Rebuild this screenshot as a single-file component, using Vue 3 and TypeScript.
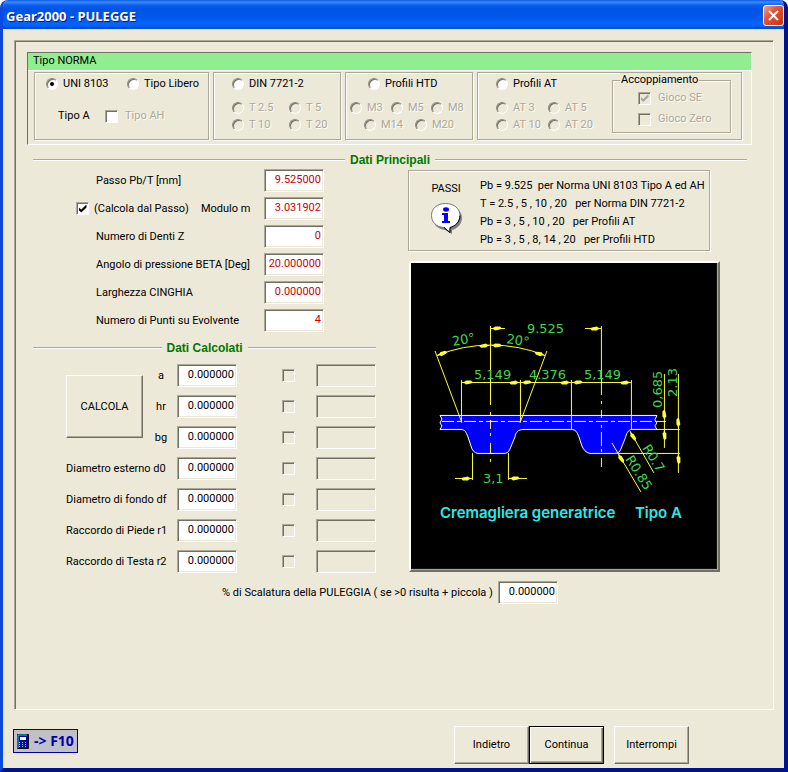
<script setup lang="ts">
import { reactive, ref } from 'vue'

interface NormOption {
  id: string
  label: string
}

const norm = ref('uni')
const tipoAh = ref(false)
const giocoSe = ref(true)
const giocoZero = ref(false)
const calcolaDalPasso = ref(true)
const scalatura = ref('0.000000')

const dinOptions: NormOption[] = [
  { id: 't25', label: 'T 2.5' },
  { id: 't5', label: 'T 5' },
  { id: 't10', label: 'T 10' },
  { id: 't20', label: 'T 20' },
]
const htdRows: NormOption[][] = [
  [
    { id: 'm3', label: 'M3' },
    { id: 'm5', label: 'M5' },
    { id: 'm8', label: 'M8' },
  ],
  [
    { id: 'm14', label: 'M14' },
    { id: 'm20', label: 'M20' },
  ],
]
const atOptions: NormOption[] = [
  { id: 'at3', label: 'AT 3' },
  { id: 'at5', label: 'AT 5' },
  { id: 'at10', label: 'AT 10' },
  { id: 'at20', label: 'AT 20' },
]

const inputs = reactive([
  { id: 'passo', label: 'Passo Pb/T [mm]', value: '9.525000' },
  { id: 'modulo', label: 'Modulo m', value: '3.031902' },
  { id: 'denti', label: 'Numero di Denti Z', value: '0' },
  { id: 'beta', label: 'Angolo di pressione BETA [Deg]', value: '20.000000' },
  { id: 'cinghia', label: 'Larghezza CINGHIA', value: '0.000000' },
  { id: 'punti', label: 'Numero di Punti su Evolvente', value: '4' },
])

const results = reactive([
  { id: 'a', label: 'a', value: '0.000000', short: true },
  { id: 'hr', label: 'hr', value: '0.000000', short: true },
  { id: 'bg', label: 'bg', value: '0.000000', short: true },
  { id: 'd0', label: 'Diametro esterno d0', value: '0.000000', short: false },
  { id: 'df', label: 'Diametro di fondo df', value: '0.000000', short: false },
  { id: 'r1', label: 'Raccordo di Piede r1', value: '0.000000', short: false },
  { id: 'r2', label: 'Raccordo di Testa r2', value: '0.000000', short: false },
])

const pitches = [
  'Pb = 9.525  per Norma UNI 8103 Tipo A ed AH',
  'T = 2.5 , 5 , 10 , 20   per Norma DIN 7721-2',
  'Pb = 3 , 5 , 10 , 20   per Profili AT',
  'Pb = 3 , 5 , 8, 14 , 20   per Profili HTD',
]

/* Arrow tips of the dimension lines: the tip sits at x,y and the body extends along the angle. */
const arrows = [
  { x: 492, y: 329, a: 0 },
  { x: 602, y: 329, a: 180 },
  { x: 438, y: 356, a: -18 },
  { x: 491, y: 346, a: 178 },
  { x: 492, y: 346, a: 2 },
  { x: 546, y: 356, a: 198 },
  { x: 463, y: 383, a: 0 },
  { x: 521, y: 383, a: 180 },
  { x: 522, y: 383, a: 0 },
  { x: 572, y: 383, a: 180 },
  { x: 573, y: 383, a: 0 },
  { x: 632, y: 383, a: 180 },
  { x: 473, y: 479, a: 180 },
  { x: 510, y: 479, a: 0 },
  { x: 665.5, y: 421, a: -90 },
  { x: 665.5, y: 430, a: 90 },
  { x: 679.5, y: 429, a: -90 },
  { x: 679.5, y: 454, a: 90 },
  { x: 631, y: 432, a: 60 },
  { x: 619, y: 454, a: 60 },
]
</script>

<template>
  <main class="window">
    <header class="titlebar">
      <h1>Gear2000 - PULEGGE</h1>
      <button class="close" type="button" aria-label="Chiudi">
        <svg viewBox="0 0 19 19" width="19" height="19" aria-hidden="true">
          <path d="M5 5l9 9M14 5l-9 9" stroke="#fff" stroke-width="2" fill="none" />
        </svg>
      </button>
    </header>

    <section class="panel">
      <div class="norma">
        <h2 class="norma-title">Tipo NORMA</h2>
        <div class="frames">
          <div class="frame uni">
            <div class="uni-row">
              <label class="opt"><input v-model="norm" type="radio" name="norm" value="uni" />UNI 8103</label>
              <label class="opt"><input v-model="norm" type="radio" name="norm" value="libero" />Tipo Libero</label>
            </div>
            <div class="uni-sub">
              <span>Tipo A</span>
              <label class="opt off"><input v-model="tipoAh" class="lit" type="checkbox" disabled />Tipo AH</label>
            </div>
          </div>

          <div class="frame din">
            <label class="opt"><input v-model="norm" type="radio" name="norm" value="din" />DIN 7721-2</label>
            <div class="subgrid">
              <label v-for="o in dinOptions" :key="o.id" class="opt off">
                <input type="radio" name="din" :value="o.id" disabled />{{ o.label }}
              </label>
            </div>
          </div>

          <div class="frame htd">
            <label class="opt"><input v-model="norm" type="radio" name="norm" value="htd" />Profili HTD</label>
            <div class="htd-rows">
              <div v-for="(row, i) in htdRows" :key="i" class="htd-row" :class="{ inner: i === 1 }">
                <label v-for="o in row" :key="o.id" class="opt off">
                  <input type="radio" name="htd" :value="o.id" disabled />{{ o.label }}
                </label>
              </div>
            </div>
          </div>

          <div class="frame at">
            <div class="at-main">
              <label class="opt"><input v-model="norm" type="radio" name="norm" value="at" />Profili AT</label>
              <div class="subgrid">
                <label v-for="o in atOptions" :key="o.id" class="opt off">
                  <input type="radio" name="at" :value="o.id" disabled />{{ o.label }}
                </label>
              </div>
            </div>
            <fieldset class="coupling">
              <legend>Accoppiamento</legend>
              <label class="opt off"><input v-model="giocoSe" type="checkbox" disabled />Gioco SE</label>
              <label class="opt off"><input v-model="giocoZero" type="checkbox" disabled />Gioco Zero</label>
            </fieldset>
          </div>
        </div>
      </div>

      <h2 class="divider wide">Dati Principali</h2>

      <div class="columns">
        <div class="left">
          <div class="fields">
            <div v-for="f in inputs" :key="f.id" class="field-row">
              <label v-if="f.id === 'modulo'" class="opt hang">
                <input v-model="calcolaDalPasso" type="checkbox" />(Calcola dal Passo)
              </label>
              <label :for="f.id">{{ f.label }}</label>
              <input :id="f.id" v-model="f.value" class="box red" type="text" />
            </div>
          </div>

          <h2 class="divider">Dati Calcolati</h2>

          <div class="results">
            <button class="btn calc" type="button">CALCOLA</button>
            <template v-for="r in results" :key="r.id">
              <label :for="r.id" :class="r.short ? 'short' : 'long'">{{ r.label }}</label>
              <input :id="r.id" v-model="r.value" class="box" type="text" />
              <input class="pick" type="checkbox" disabled :aria-label="r.label" />
              <input class="box empty" type="text" disabled :aria-label="r.label" />
            </template>
          </div>
        </div>

        <div class="right">
          <section class="passi">
            <div class="passi-head">
              <span>PASSI</span>
              <svg viewBox="0 0 32 32" width="32" height="32" aria-hidden="true">
                <path d="M17 4C26 4 32 9 32 16C32 22 27 27 22 28V32L15 28C7 27 3 22 3 16Z" fill="#808080" />
                <path d="M15.500 1.500C24 1.500 30 6.500 30 13.500C30 20 25 24.500 20 25.500V30.500L14 25.500C6 25 1.500 20 1.500 13.500C1.500 6.500 7 1.500 15.500 1.500Z" fill="#fff" stroke="#777" />
                <path d="M30 13.500C30 20 25 24.500 20 25.500V30.500L14 25.500" fill="none" stroke="#000" />
                <ellipse cx="16" cy="7.500" rx="3" ry="2.200" fill="#00f" />
                <path d="M12 11h6v8h2v2h-8v-2h2v-6h-2z" fill="#00f" />
              </svg>
            </div>
            <ul>
              <li v-for="p in pitches" :key="p">{{ p }}</li>
            </ul>
          </section>

          <svg class="drawing" viewBox="412 264 306 306" role="img" aria-label="Cremagliera generatrice Tipo A">
            <rect x="412" y="264" width="306" height="306" fill="#000" />
            <path
              d="M441 416.500H658L656 421L658 424L656 427L658 430.500H633C629 431 628 434 626 440L622 450C621 453 619 454.500 616 454.500H591C587 454 584 450 583 447L580 438C578 433 577 430.500 572 430.500H524C519 431 517 433 516 438L511 450C509.500 453.500 508 454.500 504 454.500H479C475 454 473 451 472 447L469 438C467 433 466 430.500 462 430.500H441L443 427L441 424L443 420Z"
              fill="#00f" stroke="#fff"
            />
            <path d="M443 422.500H658" stroke="#fff" stroke-dasharray="12 3 4 3" />
            <g class="line">
              <path d="M491.500 327V406M491.500 413v3M491.500 421v9M491.500 434v3M491.500 444v11M491.500 460v3" />
              <path d="M602.500 327V396M602.500 402v3M602.500 411v8M602.500 426v3M602.500 433v14M602.500 450v3M602.500 459v9" />
              <path d="M492 329.500h14M586 329.500h16" />
              <path d="M438 356.500A145 145 0 0 1 546 356.500" />
              <path d="M436 352L463 424M548 352L521 424" />
              <path d="M462 383.500H632" />
              <path d="M462.500 381V423M521.500 381V423M572.500 381V430M632.500 381V430" />
              <path d="M473.500 454V481M509.500 454V481M456 479.500h17M510 479.500h18" />
              <path d="M665.500 375V449M679.500 375V474" />
              <path d="M658 422.500h9M634 430.500h47M618 454.500h63" />
              <path d="M631 432L655 474M613 444L642 493" />
            </g>
            <polygon
              v-for="(p, i) in arrows" :key="i" points="0,0 3,-1 4,-2 9,-2 11,0 9,1 4,2 3,1" fill="#ff3"
              :transform="`translate(${p.x} ${p.y + 0.5}) rotate(${p.a})`"
            />
            <g class="dim">
              <text x="528" y="334">9.525</text>
              <text x="454" y="347" transform="rotate(-10 454 347)">20°</text>
              <text x="507" y="344" transform="rotate(9 507 344)">20°</text>
              <text x="475" y="380">5,149</text>
              <text x="530" y="380">4.376</text>
              <text x="585" y="380">5,149</text>
              <text x="484" y="484">3,1</text>
              <text transform="translate(663 409) rotate(-90)">0,685</text>
              <text transform="translate(678 398) rotate(-90)">2.13</text>
              <text transform="translate(643 449) rotate(58)">R0.7</text>
              <text transform="translate(626 460) rotate(58)">R0.85</text>
            </g>
            <g class="caption">
              <text x="441" y="519">Cremagliera generatrice</text>
              <text x="636" y="519">Tipo A</text>
            </g>
          </svg>
        </div>
      </div>

      <div class="scale-row">
        <label for="scalatura">% di Scalatura della PULEGGIA ( se &gt;0 risulta + piccola )</label>
        <input id="scalatura" v-model="scalatura" class="box" type="text" />
      </div>
    </section>

    <footer class="footer">
      <button class="f10" type="button">
        <svg viewBox="0 0 12 15" width="12" height="15" aria-hidden="true">
          <rect width="12" height="15" rx="1" fill="#000" />
          <rect x="1" y="1" width="10" height="13" fill="#0000a8" />
          <path d="M1 14V1H10" fill="none" stroke="#2fd8d8" />
          <rect x="3" y="3" width="6" height="3" fill="#fff" />
          <path d="M2 8.500h8M2 10.500h8M2 12.500h8" stroke="#5fe0ff" stroke-dasharray="1 2" />
        </svg>
        -&gt; F10
      </button>
      <div class="actions">
        <button class="btn" type="button">Indietro</button>
        <button class="btn default" type="button">Continua</button>
        <button class="btn last" type="button">Interrompi</button>
      </div>
    </footer>
  </main>
</template>

<style>
body {
  margin: 0;
  background: #fff;
}
</style>

<style scoped>
* {
  box-sizing: border-box;
}

.window {
  min-height: 100vh;
  display: flex;
  flex-direction: column;
  background: #ece9d8;
  border: solid #0831d9;
  border-width: 0 4px 4px 3px;
  border-color: #0019cf #00138c #00138c #0a48e0;
  border-radius: 8px 8px 0 0;
  overflow: hidden;
  font: 11px/14px Roboto, "Liberation Sans", sans-serif;
  color: #000;
}

h1,
h2,
ul,
fieldset {
  margin: 0;
  padding: 0;
}

input,
button {
  font: inherit;
  color: inherit;
  margin: 0;
}

.titlebar {
  height: 29px;
  display: flex;
  align-items: center;
  justify-content: space-between;
  padding: 2px 1px 0 4px;
  margin: 0 -1px 0 -1px;
  background: linear-gradient(#0a57e0 0, #3c8cff 2px, #0a5ff0 5px, #0054e3 9px, #0057ea 17px, #0066ff 24px, #0060f8 26px, #0042c8 29px);
}

h1 {
  font: bold 13px/16px "Noto Sans", sans-serif;
  color: #fff;
  text-shadow: 1px 1px #0a1883;
}

.close {
  width: 21px;
  height: 21px;
  padding: 0;
  border: 1px solid #fff;
  border-radius: 3px;
  background: linear-gradient(135deg, #f0a088, #e0553a 40%, #c93408);
  display: grid;
  place-items: center;
}

.panel {
  flex: 1;
  margin: 11px 10px 0 11px;
  padding: 11px 21px 20px 12px;
  border: 1px solid;
  border-color: #aca899 #fff #fff #aca899;
  box-shadow: inset 1px 1px #716f64;
}

.norma {
  border: 1px solid;
  border-color: #716f64 #fff #fff #716f64;
}

.norma-title {
  height: 18px;
  padding-left: 5px;
  font: inherit;
  line-height: 15px;
  background: #90ee90;
  border-bottom: 1px solid #fff;
}

.frames {
  display: grid;
  grid-template-columns: 175fr 128fr 128fr 265fr;
  gap: 4px;
  padding: 1px 9px 4px 6px;
}

.frame {
  height: 68px;
  border: 1px solid #aca899;
  box-shadow: 1px 1px #fff, inset 1px 1px #fff;
  padding-top: 4px;
}

.opt {
  display: flex;
  align-items: center;
  gap: 5px;
  white-space: nowrap;
}

.off {
  color: #aca899;
  text-shadow: 1px 1px #fff;
}

input[type="radio"],
input[type="checkbox"] {
  appearance: none;
  flex: none;
  display: grid;
  place-items: center;
  background: #fff;
  border: 1px solid;
}

input[type="radio"] {
  width: 12px;
  height: 12px;
  border-color: #8c897c #fff #fff #8c897c;
  border-radius: 50%;
  box-shadow: inset 1px 1px #716f64;
}

input[type="radio"]:checked::before {
  content: "";
  width: 4px;
  height: 4px;
  border-radius: 50%;
  background: #000;
}

input[type="checkbox"] {
  width: 13px;
  height: 13px;
  border-color: #aca899 #fff #fff #aca899;
  box-shadow: inset 1px 1px #716f64;
}

input[type="checkbox"]:checked::before {
  content: "";
  width: 8px;
  height: 8px;
  background: #000;
  clip-path: polygon(0 35%, 35% 62%, 100% 0, 100% 38%, 35% 100%, 0 70%);
}

input[type="checkbox"]:disabled:checked::before {
  background: #aca899;
}

input[type]:disabled {
  background: #ece9d8;
}

input.lit[type]:disabled {
  background: #fff;
}

.uni-row {
  display: grid;
  grid-template-columns: 81px 1fr;
  padding-left: 11px;
}

.uni-sub {
  display: grid;
  grid-template-columns: 47px 1fr;
  padding: 18px 0 0 23px;
}

.uni-sub .opt,
.coupling .opt {
  gap: 7px;
}

.din,
.at-main {
  padding-left: 18px;
}

.subgrid {
  display: grid;
  grid-template-columns: 57px 1fr;
  gap: 3px 0;
  padding-top: 10px;
}

.htd > .opt {
  padding-left: 22px;
}

.htd-rows {
  display: grid;
  gap: 3px;
  padding: 10px 0 0 4px;
}

.htd-row {
  display: grid;
  grid-template-columns: 41px 40px 1fr;
}

.htd-row.inner {
  grid-template-columns: 51px 1fr;
  padding-left: 14px;
}

.at {
  display: flex;
  justify-content: space-between;
  padding-right: 10px;
}

.at .subgrid {
  grid-template-columns: 52px 1fr;
}

.coupling {
  width: 119px;
  height: 60px;
  margin-top: -4px;
  align-self: flex-start;
  border: 1px solid #aca899;
  box-shadow: 1px 1px #fff, inset 1px 1px #fff;
  display: grid;
  gap: 7px;
  align-content: start;
  padding: 4px 0 0 25px;
}

.coupling legend {
  margin-left: -18px;
  padding: 0 1px;
  background: #ece9d8;
}

.divider {
  display: flex;
  align-items: center;
  gap: 5px;
  height: 16px;
  font: bold 12px/16px "Liberation Sans", Arial, sans-serif;
  color: #007800;
}

.divider::before,
.divider::after {
  content: "";
  flex: 1;
  height: 2px;
  background: linear-gradient(#aca899 50%, #fff 50%);
}

.divider.wide {
  margin: 7px 5px 1px 6px;
}

.columns {
  display: grid;
  grid-template-columns: 11fr 10fr;
  column-gap: 32px;
  padding: 0 32px 0 6px;
}

.fields {
  display: grid;
  gap: 5px;
  width: 291px;
  padding: 0 0 8px 63px;
}

.field-row {
  display: flex;
  align-items: center;
  height: 23px;
  white-space: nowrap;
}

.field-row .box {
  margin-left: auto;
}

.hang {
  margin-left: -20px;
  margin-right: 12px;
}

.box {
  width: 60px;
  height: 23px;
  padding: 0 2px 3px 0;
  text-align: right;
  background: #fff;
  border: 1px solid;
  border-color: #aca899 #fff #fff #aca899;
  box-shadow: inset 1px 1px #716f64, inset -1px -1px #ece9d8;
}

.red {
  color: #c80008;
}

.results {
  display: grid;
  grid-template-columns: 88px 23px 60px 1fr 60px;
  grid-auto-rows: 23px;
  row-gap: 8px;
  align-items: center;
  padding: 8px 0 0 33px;
}

.calc {
  grid-column: 1;
  grid-row: 1 / span 3;
}

.short {
  grid-column: 2;
  width: 14px;
  text-align: center;
}

.long {
  grid-column: 1 / span 2;
  white-space: nowrap;
}

.pick {
  justify-self: end;
  margin-right: 21px;
}

.right {
  display: flex;
  flex-direction: column;
  gap: 10px;
  padding-top: 1px;
}

.passi {
  height: 81px;
  margin-right: 10px;
  display: flex;
  border: 1px solid #aca899;
  box-shadow: 1px 1px #fff, inset 1px 1px #fff;
}

.passi-head {
  width: 71px;
  padding: 11px 0 0 3px;
  display: flex;
  flex-direction: column;
  align-items: center;
  gap: 6px;
}

.passi ul {
  list-style: none;
  padding-top: 6px;
  line-height: 18px;
  white-space: pre;
}

.drawing {
  display: block;
  width: calc(100% - 1px);
  align-self: flex-end;
  border: 2px solid;
  border-color: #fff #716f64 #716f64 #fff;
  background: #aca899;
  padding: 0 1px 1px 0;
}

.line {
  fill: none;
  stroke: #ff3;
}

.dim {
  fill: #3fd84a;
  font: 13px "DejaVu Sans", sans-serif;
}

.caption {
  fill: #2fe8e8;
  font: 600 15px Inter, "Liberation Sans", sans-serif;
}

.scale-row {
  display: grid;
  grid-template-columns: 276px 60px;
  align-items: center;
  padding: 8px 0 0 195px;
  white-space: nowrap;
}

.footer {
  display: flex;
  justify-content: space-between;
  align-items: flex-start;
  padding: 16px 95px 4px 10px;
}

.f10 {
  display: flex;
  align-items: center;
  gap: 5px;
  height: 24px;
  margin-top: 3px;
  padding: 0 3px;
  border: 1px solid #0000b0;
  background: #c0c0c8;
  color: #0000b0;
  font: bold 14px/16px "Noto Sans", sans-serif;
}

.actions {
  display: flex;
}

.btn {
  width: 75px;
  height: 38px;
  padding: 0;
  background: #ece9d8;
  border: 1px solid;
  border-color: #fff #716f64 #716f64 #fff;
  box-shadow: inset -1px -1px #aca899;
}

.btn.calc {
  width: 77px;
  height: 63px;
}

.btn.default {
  border-color: #000;
  box-shadow: inset 1px 1px #fff, inset -1px -1px #716f64, inset -2px -2px #aca899;
}

.btn.last {
  margin-left: 10px;
}
</style>
